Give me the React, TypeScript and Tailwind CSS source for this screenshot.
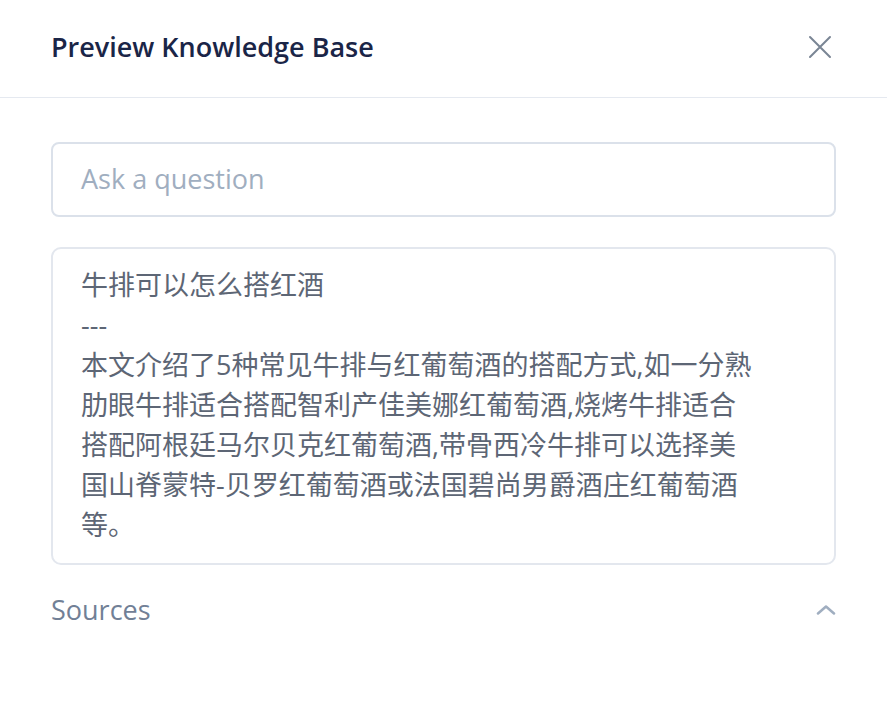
import React from "react";

const FONT = { fontFamily: '"Open Sans", "Noto Sans CJK SC", sans-serif' };

export default function App() {
  return (
    <div className="w-[887px] h-[702px] bg-white" style={FONT}>
      <div className="h-[98px] flex items-center justify-between pl-[51px] pr-[54px] border-b border-[#e5e9f0]">
        <h1 className="text-[27px] font-semibold text-[#1a2547] leading-none -mt-[5px]">Preview Knowledge Base</h1>
        <button className="w-[26px] h-[26px] flex items-center justify-center -mt-[4px]">
          <svg width="26" height="26" viewBox="0 0 26 26" fill="none" stroke="#7a8594" strokeWidth="2" strokeLinecap="round">
            <path d="M3 3L23 23M23 3L3 23" />
          </svg>
        </button>
      </div>
      <div className="px-[51px] pt-[44px] flex flex-col">
        <div className="h-[75px] rounded-[8px] border-2 border-[#dbe1ea] flex items-center pl-[28px]">
          <span className="text-[27px] text-[#a0aec0]">Ask a question</span>
        </div>
        <div className="mt-[30px] rounded-[10px] border-2 border-[#e3e7ee] pl-[28px] pt-[16px] pb-[18px] text-[27px] leading-[40px] text-[#5d6675]">
          <div className="w-[676px]">
            <div>牛排可以怎么搭红酒</div>
            <div>---</div>
            <div>本文介绍了5种常见牛排与红葡萄酒的搭配方式,如一分熟肋眼牛排适合搭配智利产佳美娜红葡萄酒,烧烤牛排适合搭配阿根廷马尔贝克红葡萄酒,带骨西冷牛排可以选择美国山脊蒙特-贝罗红葡萄酒或法国碧尚男爵酒庄红葡萄酒等。</div>
          </div>
        </div>
        <div className="mt-[25px] flex items-center justify-between">
          <span className="text-[27px] text-[#718096]">Sources</span>
          <svg width="20" height="10" viewBox="0 0 20 10" fill="none" stroke="#a0aec0" strokeWidth="2.5" strokeLinecap="round" strokeLinejoin="round">
            <path d="M2 8.5L10 1.5L18 8.5" />
          </svg>
        </div>
      </div>
    </div>
  );
}
